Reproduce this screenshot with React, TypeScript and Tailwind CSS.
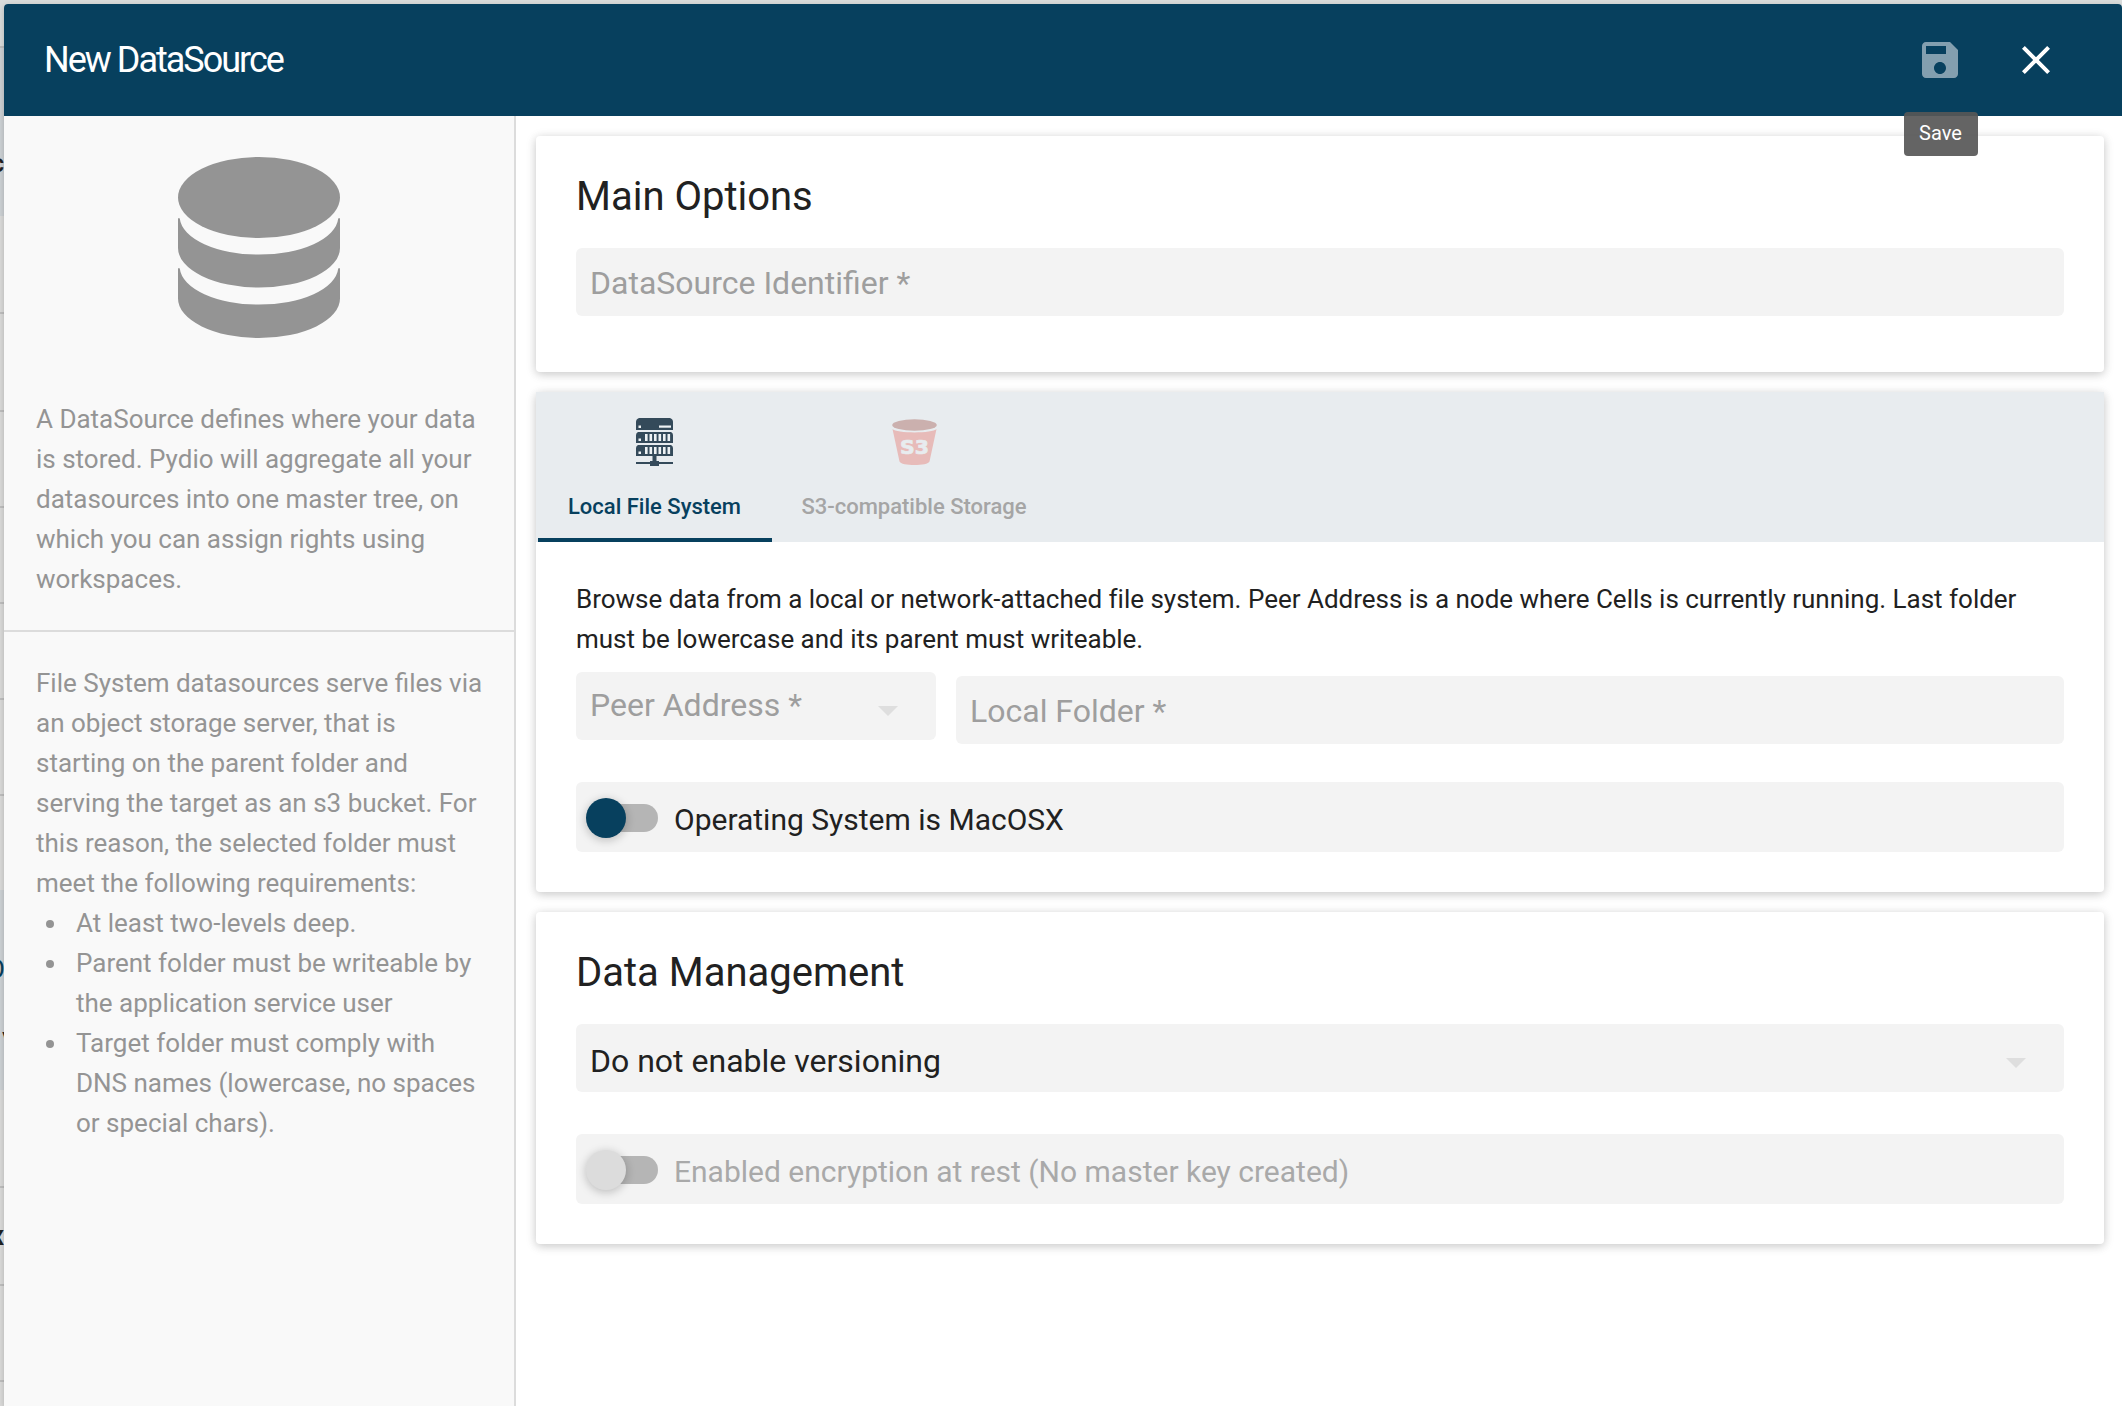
import type { ReactNode } from "react";

const backdropRows = [
  { h: 48, c: "#dadddc", line: true },
  { h: 168, c: "#cdd2d5", line: false },
  { h: 98, c: "#dbdbda", line: true },
  { h: 98, c: "#dbdbda", line: true },
  { h: 96, c: "#dbdbda", line: true },
  { h: 96, c: "#dbdbda", line: true },
  { h: 96, c: "#dbdbda", line: true },
  { h: 96, c: "#dbdbda", line: true },
  { h: 94, c: "#dbdbda", line: false },
  { h: 200, c: "#cdd2d5", line: false },
  { h: 98, c: "#dbdbda", line: true },
  { h: 98, c: "#dbdbda", line: true },
  { h: 96, c: "#dbdbda", line: true },
  { h: 24, c: "#dbdbda", line: false },
];

function Backdrop() {
  return (
    <div className="absolute inset-0 flex flex-col overflow-hidden">
      {backdropRows.map((r, i) => (
        <div
          key={i}
          className={`w-full shrink-0 ${r.line ? "border-b-2 border-[#bfbfbf]" : ""}`}
          style={{ height: r.h, backgroundColor: r.c }}
        />
      ))}
      <span className="absolute top-[147px] right-[2118px] text-[26px] leading-[32px] font-medium text-[#212121]">c</span>
      <span className="absolute top-[953px] right-[2117px] text-[26px] leading-[32px] text-[#07405e]">O</span>
      <span className="absolute top-[1025px] left-[2px] text-[22px] leading-[24px] text-[#212121]">v</span>
      <span className="absolute top-[1220px] right-[2118px] text-[28px] leading-[32px] font-bold text-[#212121]">x</span>
    </div>
  );
}

function DatabaseIcon() {
  return (
    <svg width="162" height="182" viewBox="0 0 162 182" fill="#949494">
      <ellipse cx="81" cy="40.5" rx="81" ry="40.5" />
      <path d="M0 62 Q0.300 60.500 1.800 61.500 A79.300 38 0 0 0 160.200 61.500 Q161.700 60.500 162 62 V91 A81 39.500 0 0 1 0 91 Z" />
      <path d="M0 112 Q0.300 110.500 1.800 111.500 A79.300 38 0 0 0 160.200 111.500 Q161.700 110.500 162 112 V141.500 A81 39.500 0 0 1 0 141.500 Z" />
    </svg>
  );
}

function ServerIcon() {
  const bars = [9, 13.500, 18, 22.500, 27, 31.500];
  return (
    <svg className="-ml-px" width="37" height="48" viewBox="0 0 37 48" fill="#344a5a">
      <path d="M3 0H34Q37 1 37 4V12H0V4Q0 1 3 0Z" />
      <path d="M2 14H35Q37 15 37 17V25H0V17Q0 15 2 14Z" />
      <path d="M2 27H35Q37 28 37 30V38H0V30Q0 28 2 27Z" />
      <path d="M16.500 38H20.500V43H23V44H37V46H23V48H14V46H0V44H14V43H16.500Z" />
      <g fill="#eef2f4">
        <rect x="2.500" y="7.500" width="2.500" height="2.500" />
        <rect x="23" y="7.500" width="12" height="2.200" />
        <rect x="2.500" y="20.500" width="2.500" height="2.500" />
        <rect x="2.500" y="33.500" width="2.500" height="2.500" />
        {bars.map((x) => (
          <g key={x}>
            <rect x={x} y="16" width="2.600" height="7" />
            <rect x={x} y="29" width="2.600" height="7" />
          </g>
        ))}
      </g>
    </svg>
  );
}

function BucketIcon() {
  return (
    <svg width="45" height="47" viewBox="0 0 45 47">
      <ellipse cx="22.500" cy="6" rx="22.300" ry="5.700" fill="#cbb0ae" />
      <path d="M0.500 10C4 14.500 41 14.500 44.500 10L37.500 42.500C36 47.300 9 47.300 7.500 42.500Z" fill="#e7bbb9" />
      <text
        x="22.500"
        y="35.300"
        textAnchor="middle"
        fontFamily="'DejaVu Sans', sans-serif"
        fontWeight="bold"
        fontSize="20"
        textLength="29"
        lengthAdjust="spacingAndGlyphs"
        fill="#e8ecef"
        stroke="#e8ecef"
        strokeWidth="0.7"
      >
        S3
      </text>
    </svg>
  );
}

function Caret() {
  return (
    <svg className="relative top-1" width="48" height="48" viewBox="0 0 24 24" fill="#dedede">
      <path d="M7 10l5 5 5-5z" />
    </svg>
  );
}

function Card({ children, className }: { children: ReactNode; className: string }) {
  return (
    <section className={`shrink-0 rounded-[4px] bg-white shadow-[0_2px_12px_rgba(0,0,0,0.12),0_2px_8px_rgba(0,0,0,0.12)] ${className}`}>
      {children}
    </section>
  );
}

function Toggle({ label, disabled = false }: { label: string; disabled?: boolean }) {
  return (
    <div className="flex h-[70px] items-center rounded-[6px] bg-[#f3f3f3] pt-0.5 pl-[10px]">
      <div className="relative flex h-10 w-[72px] items-center pl-0.5">
        <div className="h-7 w-[70px] rounded-full bg-[#b5b5b5]" />
        <div
          className={`absolute top-0 left-0 size-10 rounded-full shadow-[0_2px_12px_rgba(0,0,0,0.12),0_2px_8px_rgba(0,0,0,0.12)] ${disabled ? "bg-[#dcdcdc]" : "bg-[#07405e]"}`}
        />
      </div>
      <span className={`pt-1 pl-4 text-[30px] leading-[36px] ${disabled ? "text-[#a9a9a9]" : "text-[#212121]"}`}>{label}</span>
    </div>
  );
}

function Item({ children }: { children: ReactNode }) {
  return (
    <li className="flex">
      <span className="mt-[17px] mr-[22px] ml-[10px] size-2 shrink-0 rounded-full bg-[#949494]" />
      <span>{children}</span>
    </li>
  );
}

export default function App() {
  return (
    <div className="relative h-[1406px] w-[2122px] overflow-hidden font-['Roboto',sans-serif] text-[#212121]">
      <Backdrop />
      <div className="relative mt-1 ml-1 flex h-[1402px] w-[2118px] flex-col overflow-hidden rounded-t-[4px] bg-white shadow-[0_2px_6px_rgba(0,0,0,0.2)]">
        <header className="flex h-28 shrink-0 items-center justify-between bg-[#07405e] pr-[62px] pl-10 text-white">
          <h1 className="text-[36px] leading-[48px] tracking-[-2px]">New DataSource</h1>
          <div className="flex gap-12">
            <svg width="48" height="48" viewBox="0 0 24 24" fill="#839faf">
              <path d="M17 3H5c-1.110 0-2 .9-2 2v14c0 1.100.890 2 2 2h14c1.100 0 2-.9 2-2V7l-4-4zm-5 16c-1.660 0-3-1.340-3-3s1.340-3 3-3 3 1.340 3 3-1.340 3-3 3zm3-10H5V5h10v4z" />
            </svg>
            <svg width="48" height="48" viewBox="0 0 24 24" fill="white">
              <path d="M19 6.410L17.590 5 12 10.590 6.410 5 5 6.410 10.590 12 5 17.590 6.410 19 12 13.410 17.590 19 19 17.590 13.410 12z" />
            </svg>
          </div>
        </header>

        <div className="flex min-h-0 flex-1">
          <aside className="w-[512px] shrink-0 border-r-2 border-[#dcdcdc] bg-[#f9f9f9] text-[26px] leading-[40px] whitespace-nowrap text-[#949494]">
            <div className="flex h-[282px] justify-center pt-[41px]">
              <DatabaseIcon />
            </div>
            <p className="h-[234px] border-b-2 border-[#dcdcdc] px-8 pt-px">
              A DataSource defines where your data
              <br />
              is stored. Pydio will aggregate all your
              <br />
              datasources into one master tree, on
              <br />
              which you can assign rights using
              <br />
              workspaces.
            </p>
            <div className="px-8 pt-[31px]">
              <p>
                File System datasources serve files via
                <br />
                an object storage server, that is
                <br />
                starting on the parent folder and
                <br />
                serving the target as an s3 bucket. For
                <br />
                this reason, the selected folder must
                <br />
                meet the following requirements:
              </p>
              <ul>
                <Item>At least two-levels deep.</Item>
                <Item>
                  Parent folder must be writeable by
                  <br />
                  the application service user
                </Item>
                <Item>
                  Target folder must comply with
                  <br />
                  DNS names (lowercase, no spaces
                  <br />
                  or special chars).
                </Item>
              </ul>
            </div>
          </aside>

          <main className="flex flex-1 flex-col gap-5 px-5 pt-5 pr-[18px]">
            <Card className="h-[236px] px-10 pt-[37px]">
              <h2 className="text-[40px] leading-[48px]">Main Options</h2>
              <div className="mt-[27px] flex h-[68px] items-center rounded-[6px] bg-[#f3f3f3] px-3.5 pt-0.5 text-[32px] text-[#9e9e9e]">
                DataSource Identifier *
              </div>
            </Card>

            <Card className="h-[500px]">
              <div className="flex h-[150px] bg-[#e8ecef] pl-0.5 text-[22px] font-medium">
                <div className="flex w-[234px] flex-col items-center border-b-4 border-[#07405e] pt-[26px] text-[#07405e]">
                  <ServerIcon />
                  <span className="mt-[28px] -ml-px leading-[26px]">Local File System</span>
                </div>
                <div className="flex w-[284px] flex-col items-center pt-[27px] text-[#a5a5a5]">
                  <BucketIcon />
                  <span className="mt-[28px] leading-[26px]">S3-compatible Storage</span>
                </div>
              </div>
              <div className="px-10 pt-[37px]">
                <p className="text-[26px] leading-[40px] tracking-[-0.01px]">
                  Browse data from a local or network-attached file system. Peer Address is a node where Cells is currently running. Last folder
                  <br />
                  must be lowercase and its parent must writeable.
                </p>
                <div className="mt-[13px] flex items-start gap-5 text-[32px] text-[#9e9e9e]">
                  <div className="flex h-[68px] w-[360px] items-center justify-between rounded-[6px] bg-[#f3f3f3] pr-6 pl-3.5">
                    <span className="-mt-0.5">Peer Address *</span>
                    <Caret />
                  </div>
                  <div className="mt-1 flex h-[68px] flex-1 items-center rounded-[6px] bg-[#f3f3f3] px-3.5 pt-0.5">Local Folder *</div>
                </div>
                <div className="mt-[38px]">
                  <Toggle label="Operating System is MacOSX" />
                </div>
              </div>
            </Card>

            <Card className="h-[332px] px-10 pt-[37px]">
              <h2 className="text-[40px] leading-[48px]">Data Management</h2>
              <div className="mt-[27px] flex h-[68px] items-center justify-between rounded-[6px] bg-[#f3f3f3] pr-6 pl-3.5 text-[32px]">
                <span className="pt-1.5">Do not enable versioning</span>
                <Caret />
              </div>
              <div className="mt-[42px]">
                <Toggle label="Enabled encryption at rest (No master key created)" disabled />
              </div>
            </Card>
          </main>
        </div>
      </div>
      <div className="absolute top-[112px] left-[1904px] flex h-11 w-[74px] items-center justify-center rounded-[4px] bg-[#575757]/92 pr-px pb-0.5 text-[20px] text-white">
        Save
      </div>
    </div>
  );
}
